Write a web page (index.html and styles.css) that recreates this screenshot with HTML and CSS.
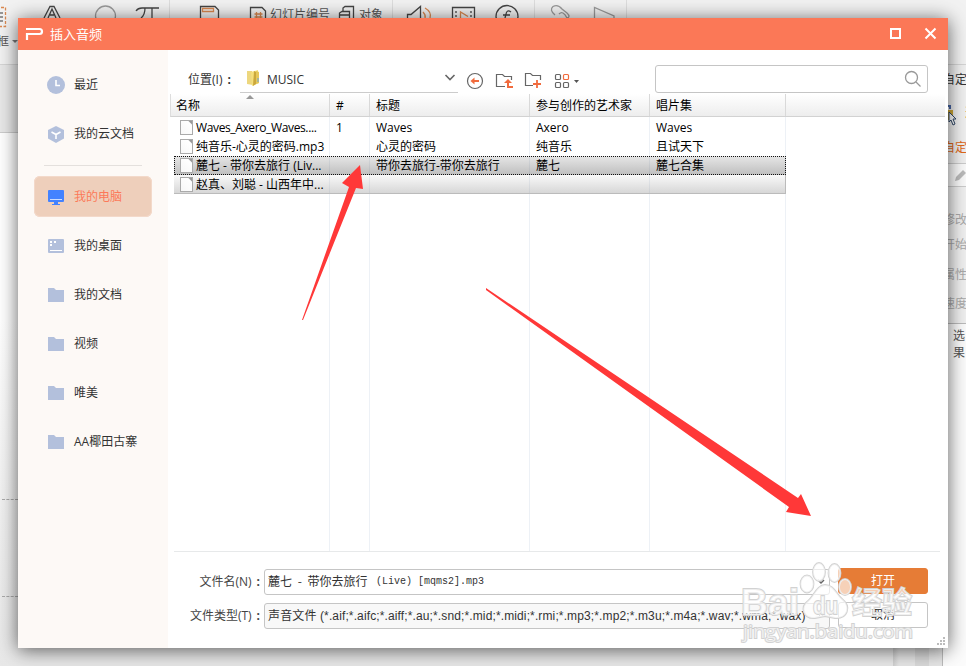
FILE: index.html
```html
<!DOCTYPE html>
<html lang="zh-CN">
<head>
<meta charset="utf-8">
<title>插入音频</title>
<link rel="stylesheet" href="styles.css">
</head>
<body>
<div class="app">
  <div class="ribbon">
    <svg class="ribbon-art" width="966" height="64" fill="none" stroke="#444" stroke-width="1.3">
      <path d="M-8 7.500H5.500V26.500H-8" stroke="#d98850" stroke-dasharray="3 1.500"/>
      <path d="M0 13H3M0 17H3M0 21H3" stroke="#777"/>
      <path d="M12 40h6l-3 3z" fill="#777" stroke="none"/>
      <path d="M44 18L50 6.500H54L60 18M48 18L52 9L56 18M50 15H54"/>
      <circle cx="105.500" cy="16" r="10" stroke="#999"/>
      <path d="M136 11Q138 8 142 8H159M145 8Q145 15 141 18M152 8V18"/>
      <path d="M200.500 18V6.500H215L218.500 10V18"/><path d="M202.500 8.500H213.500V11.500H202.500Z" stroke="#d98850"/>
      <path d="M250.500 18V7.500H262L265.500 11V18"/><path d="M256.500 12V18M260.500 12V18M254.500 14H262.500M254.500 17H262.500" stroke="#d98850"/>
      <path d="M343 11V8L345 6.500H353.500V18M339.500 18V13L342 11.500H349.500V18M340 15H349"/>
      <path d="M407.500 18V14.500H411L420.500 6.500V18"/><path d="M423 12Q426 15 425 18M425 8Q432 12 430 18" stroke="#d98850"/>
      <path d="M452.500 18V7.500H474.500V18M456 11V13M456 15V17M471 11V13M471 15V17"/><path d="M460.500 18V12L468 16.500" stroke="#d98850"/>
      <circle cx="507" cy="16.500" r="11"/><path d="M511 12Q507 9 506 14L505 18M503 15H510"/>
      <path d="M555 15Q549 10 553 6.500Q558 4 562 9L567 13Q571 17 567 18M559 14Q563 10 567 18" stroke="#999"/>
      <path d="M594.500 18V7.500L614 16V18" stroke="#999"/>
      <path d="M169.500 0V18M392.500 0V18M534.500 0V18M626.500 0V18" stroke="#ddd" stroke-width="1"/>
    </svg>
    <span class="ribbon-label slide-number">幻灯片编号</span>
    <span class="ribbon-label object-label">对象</span>
    <span class="ribbon-label frame-label">框</span>
  </div>
  <div class="workspace">
    <div class="canvas"><div class="gutter"></div><div class="slide"></div></div>
    <div class="scroll"></div>
    <aside class="pane">
      <div class="pane-title">自定义</div>
      <div class="pane-tool"><svg width="20" height="24"><path d="M0 6H8V16H0Z" fill="#cda735"/><path d="M1 5V2H5V5" fill="none" stroke="#4867a8" stroke-width="2"/><path d="M4 8L11 15H8L10 20L8 21L6 16L4 18Z" fill="#fff" stroke="#314968"/></svg><span>选</span></div>
      <div class="pane-link">自定义</div>
      <div class="pane-edit"><svg width="20" height="22"><path d="M7 17L8 13L15 6L18 9L11 16Z" fill="#bbb"/></svg></div>
      <div class="pane-field first">修改</div><div class="pane-field second">开始</div><div class="pane-field third">属性</div><div class="pane-field">速度</div>
      <div class="pane-note">选<br>果</div>
    </aside>
  </div>

  <main class="dialog">
    <header class="titlebar">
      <svg width="20" height="18" fill="none" stroke="#fff" stroke-width="2.200"><path d="M1 4H14.500Q17 4 17 6.500T14.500 9H2V15"/></svg>
      <h1>插入音频</h1>
      <svg class="window-actions" width="50" height="18" fill="none" stroke="#fff" stroke-width="2"><path d="M3 4H12V13H3Z"/><path d="M37.500 3.500L47.500 13.500M47.500 3.500L37.500 13.500"/></svg>
    </header>
    <div class="dialog-body">
      <nav class="sidebar">
        <div class="place"><svg width="18" height="18"><circle cx="9" cy="9" r="9" fill="#b3c0dc"/><path d="M9 4V9.500H13" fill="none" stroke="#fff" stroke-width="1.600"/></svg>最近</div>
        <div class="place"><svg width="18" height="18"><path d="M9 1L17 5V13.500L9 18L1 13.500V5Z" fill="#b3c0dc"/><path d="M4.500 7L9 9.500L13.500 7M9 9.500V14" fill="none" stroke="#fff" stroke-width="1.600"/></svg>我的云文档</div>
        <div class="divider"></div>
        <div class="place active"><svg width="18" height="18"><path d="M2 2H16Q17 2 17 3V13Q17 14 16 14H11V16H13V17H5V16H7V14H2Q1 14 1 13V3Q1 2 2 2" fill="#4382ff"/><path d="M3 11.500H15" stroke="#cbdcff"/></svg>我的电脑</div>
        <div class="place"><svg width="18" height="18"><rect x="1" y="2" width="16" height="14" rx="1" fill="#b3c0dc"/><path d="M3 4H5V6H3ZM7 4H9V6H7ZM3 7H5V9H3ZM3 13H15V14H3Z" fill="#fff"/></svg>我的桌面</div>
        <div class="place"><svg width="18" height="18"><path d="M1 2H7L9 4H17V16H1Z" fill="#b3c0dc"/></svg>我的文档</div>
        <div class="place"><svg width="18" height="18"><path d="M1 2H7L9 4H17V16H1Z" fill="#b3c0dc"/></svg>视频</div>
        <div class="place"><svg width="18" height="18"><path d="M1 2H7L9 4H17V16H1Z" fill="#b3c0dc"/></svg>唯美</div>
        <div class="place"><svg width="18" height="18"><path d="M1 2H7L9 4H17V16H1Z" fill="#b3c0dc"/></svg>AA椰田古寨</div>
      </nav>
      <section class="browser">
        <div class="toolbar">
          <div class="location-label">位置(I)<b>:</b></div>
          <div class="location">
            <svg width="14" height="18"><path d="M1 2H6L7 16L1 15Z" fill="#edd77e"/><path d="M5 3L12 1L13 14L6 17Z" fill="#f5df7b"/><path d="M8 2L10 3V15L7 17Z" fill="#cba83c"/><path d="M10 2L13 3V14L10 15Z" fill="#e5c75a"/><path d="M12 9V13" stroke="#6da5d7"/></svg>
            <span>MUSIC</span>
            <svg class="chevron" width="12" height="8" fill="none" stroke="#666" stroke-width="1.600"><path d="M1.500 1L6 5.500L10.500 1"/></svg>
          </div>
          <svg class="tools" width="118" height="22" fill="none" stroke="#666" stroke-width="1.200">
            <circle cx="9" cy="11" r="7.500"/><path d="M13 11H6" stroke="#f16b3d" stroke-width="2"/><path d="M4.500 11L8.500 7.500V14.500Z" fill="#f16b3d" stroke="none"/>
            <path d="M39 16.500H30.500V4.500H36.500L38.500 6.500H45.500V10"/><path d="M47 17H42V11" stroke="#f16b3d" stroke-width="2"/><path d="M38 13L42 9L46 13Z" fill="#f16b3d" stroke="none"/>
            <path d="M67 15.500H59.500V3.500H64.500L66.500 5.500H74.500V10"/><path d="M71 10V18M67 14H75" stroke="#f16b3d" stroke-width="1.800"/>
            <rect x="89.500" y="4.500" width="5" height="5" rx="1"/><rect x="97.500" y="4.500" width="5" height="5" rx="1" stroke="#f16b3d"/><rect x="89.500" y="12.500" width="5" height="5" rx="1"/><rect x="97.500" y="12.500" width="5" height="5" rx="1"/><path d="M108 10H113L110.500 13Z" fill="#555" stroke="none"/>
          </svg>
          <div class="search"><svg width="18" height="18" fill="none" stroke="#999" stroke-width="1.300"><circle cx="7.500" cy="7.500" r="6"/><path d="M12 12L16.500 16.500"/></svg></div>
        </div>
        <div class="file-table">
          <div class="table-head columns"><span>名称<i class="sort"></i></span><span>#</span><span>标题</span><span>参与创作的艺术家</span><span>唱片集</span><span></span></div>
          <div class="table-body">
            <div class="row columns"><span class="name"><i class="file"></i><em class="tight">Waves_Axero_Waves....</em></span><span>1</span><span>Waves</span><span>Axero</span><span>Waves</span></div>
            <div class="row columns"><span class="name"><i class="file"></i>纯音乐-心灵的密码.mp3</span><span></span><span>心灵的密码</span><span>纯音乐</span><span>且试天下</span></div>
            <div class="row columns selected"><span class="name"><i class="file"></i>麓七 - 带你去旅行 (Liv...</span><span></span><span>带你去旅行-带你去旅行</span><span>麓七</span><span>麓七合集</span></div>
            <div class="row columns hovered"><span class="name"><i class="file"></i>赵真、刘聪 - 山西年中...</span><span></span><span></span><span></span><span></span></div>
          </div>
        </div>
        <div class="form">
          <div class="form-label">文件名(N)<b>:</b></div><div class="field filename"><span>麓七 - 带你去旅行</span><span class="mono">(Live) [mqms2].mp3</span><svg class="chevron" width="10" height="8" fill="none" stroke="#666" stroke-width="1.500"><path d="M2 2L5 5L8 2"/></svg></div><button class="primary">打开</button>
          <div class="form-label">文件类型(T)<b>:</b></div><div class="field filetype"><span>声音文件 (*.aif;*.aifc;*.aiff;*.au;*.snd;*.mid;*.midi;*.rmi;*.mp3;*.mp2;*.m3u;*.m4a;*.wav;*.wma;*.wax)</span><svg class="chevron" width="10" height="8" fill="none" stroke="#aaa"><path d="M2 2L5 5L8 2"/></svg></div><button>取消</button>
        </div>
      </section>
    </div>
  </main>
  <svg class="annotations" width="966" height="666">
    <path fill="#bcbcbc" d="M943 637h2v2h-2zM940 640h2v2h-2zM943 640h2v2h-2zM937 643h2v2h-2zM940 643h2v2h-2zM943 643h2v2h-2z"/>
    <path d="M302 320L349 187L342 183L360 165L363 189L356 188L303 320Z" fill="#ff3838"/>
    <path d="M486 288L798 498L801 494L811 516L786 512L789 507L486 290Z" fill="#ff3838"/>
    <g class="watermark">
      <ellipse cx="807" cy="584" rx="6.500" ry="8.500"/><ellipse cx="819" cy="572" rx="6" ry="9"/><ellipse cx="834.500" cy="573" rx="6" ry="9"/><ellipse cx="845" cy="587" rx="6" ry="8"/>
      <path d="M825 585C834 585 836 594 842 599C852 607 847 619 835 618L825 616L815 618C803 619 800 607 808 601C814 596 817 585 825 585Z"/>
      <text x="741" y="615" class="bai" textLength="58" lengthAdjust="spacingAndGlyphs">Bai</text><text x="813" y="614" class="du" textLength="25" lengthAdjust="spacingAndGlyphs">du</text><text x="852" y="613" class="experience" textLength="60" lengthAdjust="spacingAndGlyphs">经验</text>
      <text x="743" y="638" class="site" textLength="170" lengthAdjust="spacingAndGlyphs">jingyan.baidu.com</text>
    </g>
  </svg>
</div>
</body>
</html>
```
FILE: styles.css
```css
* { box-sizing: border-box; }
body { margin: 0; font: 12px/18px "Open Sans", "Noto Sans CJK SC", sans-serif; color: #333; overflow: hidden; }
svg { display: block; flex: none; }
.app { position: relative; width: 966px; height: 666px; overflow: hidden; background: #e8e8e8; }
.ribbon { position: relative; height: 65px; background: #f2f2f2; border-bottom: 1px solid #d5d5d5; }
.ribbon-label { position: absolute; color: #555; }
.slide-number { left: 270px; top: 6px; }
.object-label { left: 359px; top: 6px; }
.frame-label { left: -3px; top: 33px; }
.workspace { display: flex; height: 601px; }
.canvas { width: 893px; background: #e8e8e8; }
.gutter { height: 68px; border-bottom: 1px solid #ccc; }
.slide { position: relative; width: 18px; height: 533px; background: linear-gradient(#fff 0, #fff 35%, #f0f0f0 72%, #e8e8e8); }
.slide::after { content: ""; position: absolute; top: 366px; left: 2px; width: 16px; border-top: 1px dashed #aaa; }
.slide::before { content: ""; position: absolute; top: 463px; left: 2px; width: 16px; border-top: 1px dashed #aaa; }
.scroll { width: 49px; background: linear-gradient(90deg, #cfcfcf, #e6e6e6 6px 22px, #d9d9d9 22px 36px, #e6e6e6 36px); }
.pane { width: 24px; border-left: 1px solid #bbb; background: #f0f0f0; white-space: nowrap; overflow: hidden; }
.pane-title { height: 34px; padding-top: 6px; }
.pane-tool { display: flex; height: 37px; padding: 5px 0 0 2px; color: #e06818; }
.pane-link { height: 27px; padding-top: 3px; color: #e06818; }
.pane-edit { height: 24px; padding-left: 5px; background: #fafafa; border: solid #ccc; border-width: 1px 0; }
.pane-field { height: 39px; padding-top: 11px; color: #aaa; }
.pane-field.first { height: 48px; padding-top: 24px; }
.pane-field.second { height: 20px; padding-top: 1px; }
.pane-field.third { height: 29px; }
.pane-note { height: 350px; padding: 3px 0 0 10px; line-height: 17px; background: #fcfcfc; border-top: 1px solid #bbb; color: #555; }
.dialog { position: absolute; inset: 18px; display: flex; flex-direction: column; background: #fff; box-shadow: 0 2px 18px rgba(0,0,0,.62); }
.titlebar { height: 32px; display: flex; align-items: center; padding: 0 10px 0 7px; background: #fb7857; color: #fff; }
.titlebar h1 { margin: 0 0 0 5px; font-weight: 400; font-size: 13px; }
.window-actions { margin-left: auto; }
.dialog-body { display: flex; height: 598px; }
.sidebar { display: flex; flex-direction: column; gap: 8px; width: 150px; padding: 14px 16px; background: #fdf9f6; }
.place { height: 41px; display: flex; align-items: center; gap: 9px; padding-left: 13px; border-radius: 6px; white-space: nowrap; flex: none; }
.place.active { color: #fc7959; background: #eecfbb; box-shadow: inset 0 0 0 1px #f3d9ca; }
.divider { height: 1px; margin: 3px 10px 2px; background: #e4e0dd; flex: none; }
.browser { width: 780px; }
.toolbar { display: flex; height: 44px; padding: 15px 20px 1px 20px; }
.location-label { width: 52px; padding-top: 6px; white-space: nowrap; }
.location-label b, .form-label b { margin-left: 5px; }
.location { width: 218px; height: 28px; display: flex; align-items: center; padding: 0 2px 2px 6px; border-bottom: 1px solid #ccc; }
.location span { margin-left: 7px; padding-top: 4px; }
.chevron { margin-left: auto; }
.tools { margin: 5px 0 0 8px; }
.search { width: 273px; height: 28px; margin-left: auto; border: 1px solid #c5c5c5; border-radius: 3px; display: flex; justify-content: flex-end; align-items: center; padding-right: 5px; }
.file-table { height: 458px; margin: 0 3px 0 2px; color: #000; }
.columns { display: grid; grid-template-columns: 160px 40px 160px 120px 136px 1fr; }
.table-head { height: 23px; background: linear-gradient(#fff, #ededed); border-bottom: 1px solid #d2d2d2; border-left: 1px solid #ddd; grid-template-columns: 159px 40px 160px 120px 136px 1fr; }
.table-head span { position: relative; padding: 3px 0 0 5px; border-right: 1px solid #d9d9d9; line-height: 17px; }
.table-head span:nth-child(n+2) { padding-left: 6px; }
.table-head span:last-child { border: 0; }
.sort { position: absolute; left: 75px; top: 1px; border: 4px solid transparent; border-top: 0; border-bottom-color: #999; }
.table-body { height: 435px; margin: 0 5px 0 4px; padding-top: 1px; border-bottom: 1px solid #e7e9ea; background: linear-gradient(90deg, transparent 155px, #edf1f6 155px 156px, transparent 156px 195px, #edf1f6 195px 196px, transparent 196px 355px, #edf1f6 355px 356px, transparent 356px 475px, #edf1f6 475px 476px, transparent 476px 611px, #edf1f6 611px 612px, transparent 612px); }
.row { width: 612px; height: 19px; grid-template-columns: 156px 40px 160px 120px 136px; line-height: 19px; }
.row span { padding-left: 6px; white-space: nowrap; }
.row .name { display: flex; align-items: center; padding-left: 6px; }
.tight { font-style: normal; letter-spacing: -.37px; }
.file { width: 13px; height: 15px; margin-right: 3px; flex: none; border: 1px solid #aaa; background: linear-gradient(225deg, #999 2px, #fff 3px, #f7f7f7); }
.selected { background: linear-gradient(rgba(120,120,120,.18), rgba(100,100,100,.42)); outline: 1px dotted #111; outline-offset: -1px; }
.hovered { background: linear-gradient(rgba(180,180,180,.08), rgba(140,140,140,.35)); border: solid #bbb; border-width: 0 1px 1px 0; }
.form { display: grid; grid-template-columns: 96px 566px 90px; grid-template-rows: 26px 26px; row-gap: 8px; padding-top: 17px; }
.form-label { padding-right: 4px; text-align: right; line-height: 26px; white-space: nowrap; color: #444; }
.field { display: flex; align-items: center; border: 1px solid #c5c5c5; border-radius: 3px; padding: 0 3px; white-space: nowrap; }
.filename { font-family: "Noto Sans CJK SC", sans-serif; }
.filename > span:first-child { width: 108px; padding-bottom: 2px; word-spacing: 3px; }
.mono { padding-bottom: 1px; font: 10px "Liberation Mono", monospace; }
.filetype { background: #f8f8f8; font-family: "Liberation Sans", "Noto Sans CJK SC", sans-serif; letter-spacing: .125px; }
.form button { width: 90px; height: 26px; margin: -1px 0 0 8px; padding: 0; border: 1px solid #c5c5c5; border-radius: 3px; background: #fff; color: #222; font: inherit; }
.form .primary { border-color: #e67c36; background: #e67c36; color: #fff; }
.annotations { position: absolute; inset: 0; pointer-events: none; }
.watermark { fill: rgba(255,255,255,.65); stroke: #d2d2d2; stroke-width: 1.8px; paint-order: stroke; font-family: "Liberation Sans", "Noto Sans CJK SC", sans-serif; font-weight: 700; }
.bai { font-size: 37px; }
.du { font-size: 24px; }
.experience { font-size: 30px; }
.site { font-family: "Open Sans", sans-serif; font-size: 19px; font-weight: 400; }
```
